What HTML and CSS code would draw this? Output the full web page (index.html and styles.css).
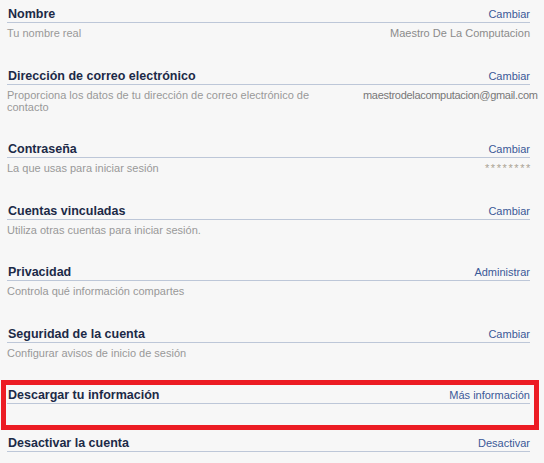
FILE: index.html
```html
<!DOCTYPE html>
<html lang="es">
<head>
    <meta charset="UTF-8">
    <meta name="viewport" content="width=device-width, initial-scale=1.0">
    <title>Configuración general de la cuenta</title>
    <link rel="stylesheet" href="styles.css">
</head>
<body>

    <div class="settings">
        <div class="row">
            <div class="row-head">
                <h3 class="row-title">Nombre</h3>
                <a class="row-link" href="#">Cambiar</a>
            </div>
            <div class="row-desc">
                <span class="row-note">Tu nombre real</span>
                <span class="row-value">Maestro De La Computacion</span>
            </div>
        </div>

        <div class="row">
            <div class="row-head">
                <h3 class="row-title">Dirección de correo electrónico</h3>
                <a class="row-link" href="#">Cambiar</a>
            </div>
            <div class="row-desc">
                <span class="row-note">Proporciona los datos de tu dirección de correo electrónico de contacto</span>
                <span class="row-value row-value--dark">maestrodelacomputacion@gmail.com</span>
            </div>
        </div>

        <div class="row">
            <div class="row-head">
                <h3 class="row-title">Contraseña</h3>
                <a class="row-link" href="#">Cambiar</a>
            </div>
            <div class="row-desc">
                <span class="row-note">La que usas para iniciar sesión</span>
                <span class="row-value row-value--stars">********</span>
            </div>
        </div>

        <div class="row">
            <div class="row-head">
                <h3 class="row-title">Cuentas vinculadas</h3>
                <a class="row-link" href="#">Cambiar</a>
            </div>
            <div class="row-desc">
                <span class="row-note">Utiliza otras cuentas para iniciar sesión.</span>
            </div>
        </div>

        <div class="row">
            <div class="row-head">
                <h3 class="row-title">Privacidad</h3>
                <a class="row-link" href="#">Administrar</a>
            </div>
            <div class="row-desc">
                <span class="row-note">Controla qué información compartes</span>
            </div>
        </div>

        <div class="row">
            <div class="row-head">
                <h3 class="row-title">Seguridad de la cuenta</h3>
                <a class="row-link" href="#">Cambiar</a>
            </div>
            <div class="row-desc">
                <span class="row-note">Configurar avisos de inicio de sesión</span>
            </div>
        </div>

        <!-- highlighted row -->
        <div class="row row--marked">
            <div class="row-head">
                <h3 class="row-title">Descargar tu información</h3>
                <a class="row-link" href="#">Más información</a>
            </div>
        </div>

        <div class="row">
            <div class="row-head">
                <h3 class="row-title">Desactivar la cuenta</h3>
                <a class="row-link" href="#">Desactivar</a>
            </div>
        </div>
    </div>

</body>
</html>
```

FILE: styles.css
```css
* {
    box-sizing: border-box;
    margin: 0;
    padding: 0;
}

body {
    background: #f7f7f7;
    font-family: 'Liberation Sans', Arial, sans-serif;
    font-size: 11px;
    overflow: hidden;
}

.settings {
    padding: 0 14px 0 7px;
}

.row {
    margin-bottom: 23.5px;
}

.row-head {
    display: flex;
    justify-content: space-between;
    align-items: flex-end;
    height: 23px;
    padding-bottom: 1px;
    border-bottom: 1px solid #bdc7d8;
}

.row-title {
    font-size: 12.5px;
    font-weight: bold;
    line-height: 14px;
    color: #1c2a47;
    padding-left: 1px;
}

.row-link {
    font-size: 11px;
    line-height: 14px;
    color: #3b5998;
    text-decoration: none;
}

.row-desc {
    display: flex;
    justify-content: space-between;
    padding-top: 4px;
    line-height: 12px;
    height: auto;
    color: #999;
    margin-bottom: -1px;
}

.row-note {
    max-width: 320px;
}

.row-value {
    flex: 0 0 167px;
    min-width: 0;
    text-align: right;
    white-space: nowrap;
    color: #8b8b8b;
}

.row-value--dark {
    color: #777;
    letter-spacing: -0.3px;
}

.row-value--stars {
    color: #aba494;
    letter-spacing: 1.6px;
    margin-right: -2px;
}

.row--marked {
    position: relative;
    margin-bottom: 25px;
}

/* red annotation frame */
.row--marked::after {
    content: '';
    position: absolute;
    top: -1px;
    left: -6px;
    right: -9px;
    height: 40px;
    border: 5px solid #ec1c24;
}
```
